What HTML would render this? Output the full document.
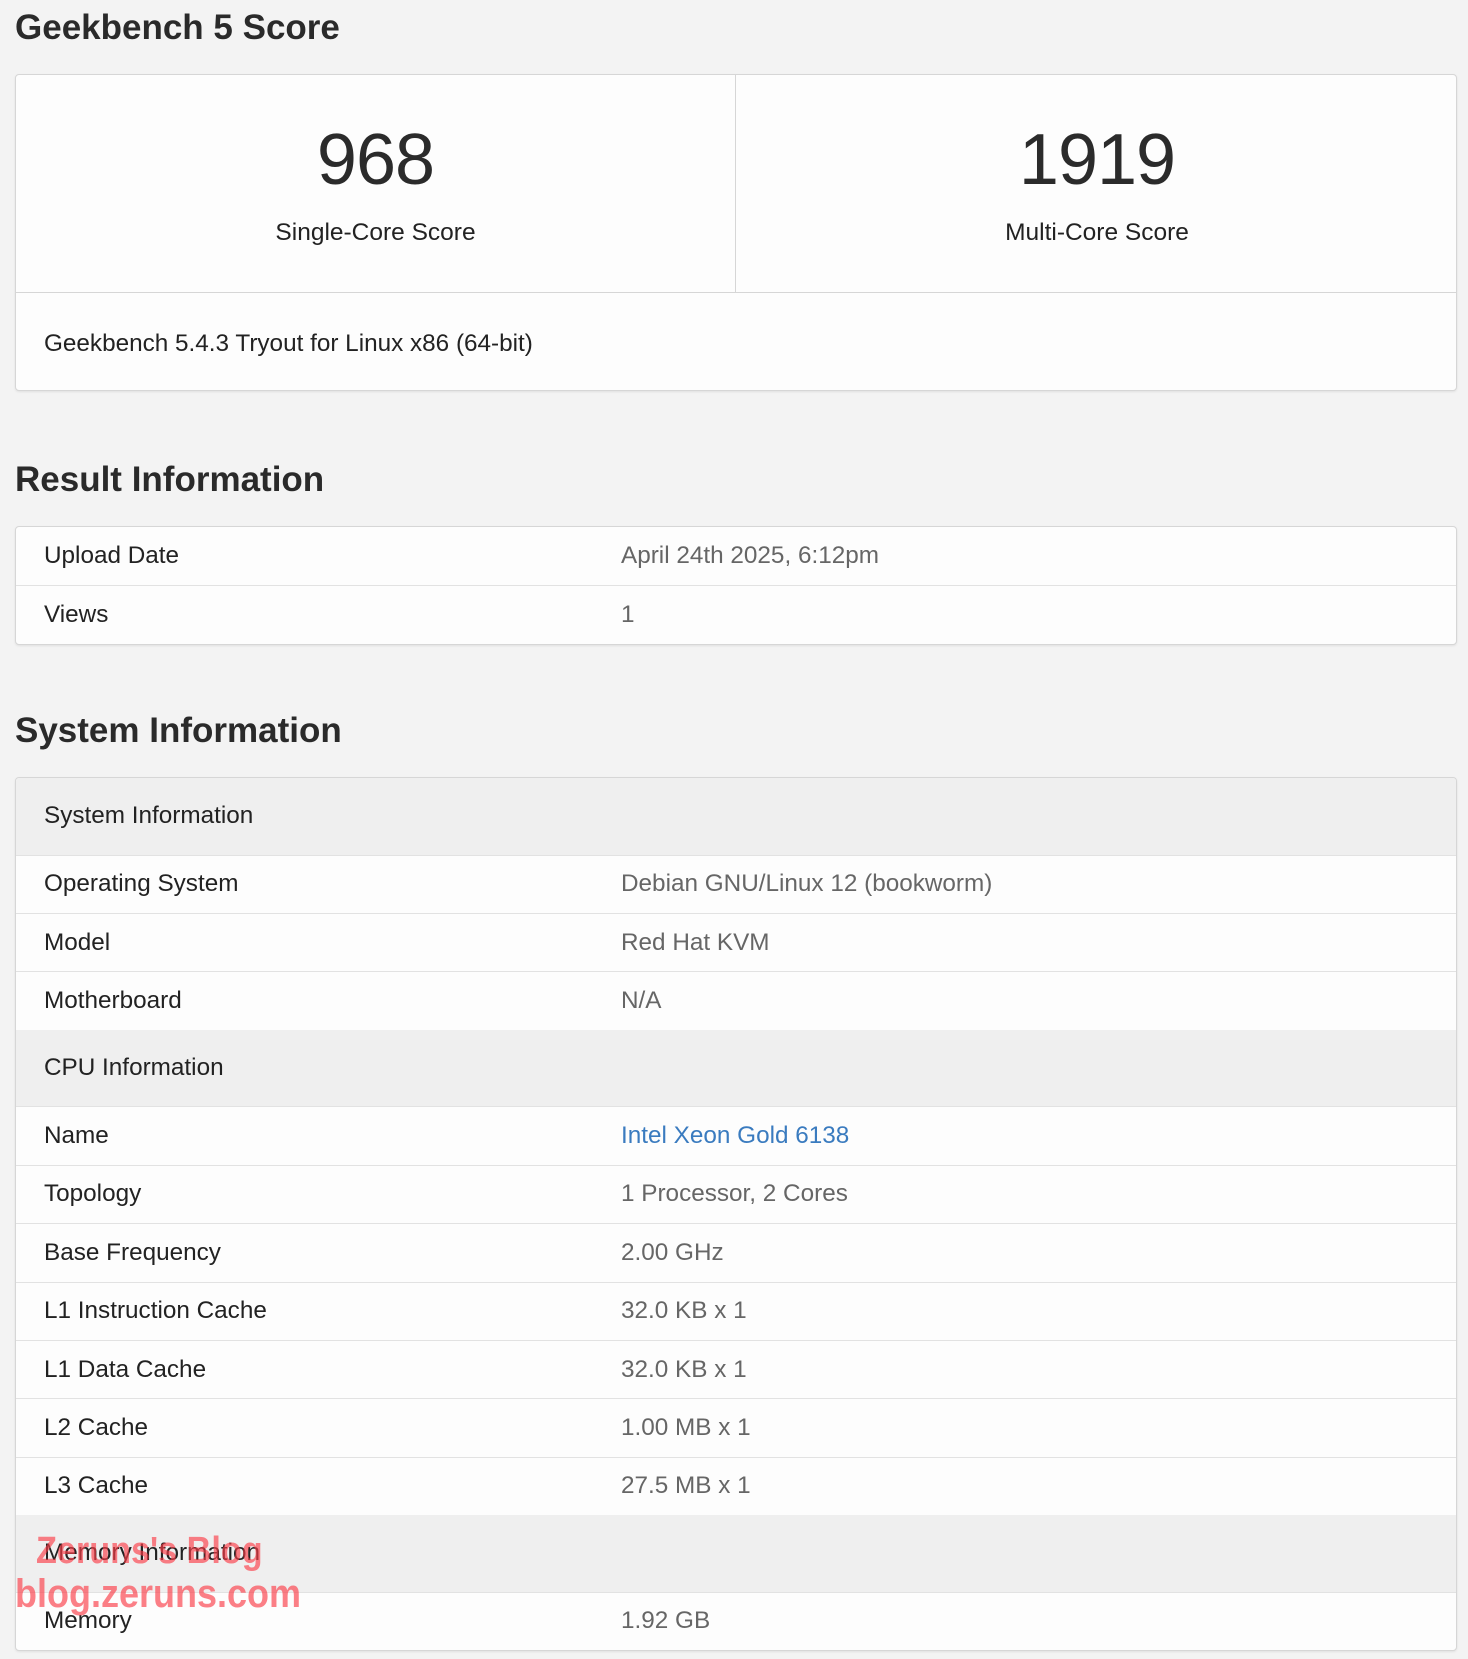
<!DOCTYPE html>
<html><head><meta charset="utf-8"><style>
*{box-sizing:border-box;margin:0;padding:0}
body{width:1468px;height:1659px;background:#f3f3f3;font-family:"Liberation Sans",Arial,sans-serif;color:#222;position:relative;overflow:hidden}
h2{position:absolute;left:15px;font-size:35px;font-weight:bold;color:#2a2a2a}
.card{position:absolute;left:15px;width:1442px;background:#fdfdfd;border:1px solid #d6d6d6;border-radius:4px;box-shadow:0 1px 2px rgba(0,0,0,.08);overflow:hidden}
.score{position:absolute;top:0;height:217px;width:720px;text-align:center}
.score .n{position:absolute;top:44px;width:100%;font-size:72px;color:#2b2b2b;letter-spacing:-1px}
.score .l{position:absolute;top:144px;width:100%;font-size:24.5px;color:#222}
.row{position:relative;height:58.4px;border-top:1px solid #e2e2e2;font-size:24.3px}
.row:first-child{border-top:none}
.row .k{position:absolute;left:28px;top:50%;transform:translateY(-50%)}
.row .v{position:absolute;left:605px;top:50%;transform:translateY(-50%);color:#666}
.hd{height:76.6px;background:#efefef;border-top:none}
.hd+.row{border-top:1px solid #e2e2e2}
a{color:#3a7bbf;text-decoration:none}
.wm{position:absolute;color:rgba(250,60,70,.65);font-family:"Liberation Sans",sans-serif;font-weight:bold;transform:scaleX(0.9);transform-origin:left top;white-space:nowrap}
</style></head><body>
<h2 style="top:8px">Geekbench 5 Score</h2>
<div class="card" style="top:74px;height:317px">
 <div class="score" style="left:0;border-right:1px solid #d6d6d6">
  <div class="n">968</div><div class="l">Single-Core Score</div></div>
 <div class="score" style="left:720px;width:722px">
  <div class="n">1919</div><div class="l">Multi-Core Score</div></div>
 <div style="position:absolute;top:217px;left:0;right:0;border-top:1px solid #d6d6d6"></div>
 <div style="position:absolute;top:255px;left:28px;font-size:24.3px">Geekbench 5.4.3 Tryout for Linux x86 (64-bit)</div>
</div>
<h2 style="top:460px">Result Information</h2>
<div class="card" style="top:526px">
 <div class="row"><span class="k">Upload Date</span><span class="v">April 24th 2025, 6:12pm</span></div>
 <div class="row"><span class="k">Views</span><span class="v">1</span></div>
</div>
<h2 style="top:711px">System Information</h2>
<div class="card" style="top:777px">
 <div class="row hd"><span class="k">System Information</span></div>
 <div class="row"><span class="k">Operating System</span><span class="v">Debian GNU/Linux 12 (bookworm)</span></div>
 <div class="row"><span class="k">Model</span><span class="v">Red Hat KVM</span></div>
 <div class="row"><span class="k">Motherboard</span><span class="v">N/A</span></div>
 <div class="row hd"><span class="k">CPU Information</span></div>
 <div class="row"><span class="k">Name</span><span class="v"><a>Intel Xeon Gold 6138</a></span></div>
 <div class="row"><span class="k">Topology</span><span class="v">1 Processor, 2 Cores</span></div>
 <div class="row"><span class="k">Base Frequency</span><span class="v">2.00 GHz</span></div>
 <div class="row"><span class="k">L1 Instruction Cache</span><span class="v">32.0 KB x 1</span></div>
 <div class="row"><span class="k">L1 Data Cache</span><span class="v">32.0 KB x 1</span></div>
 <div class="row"><span class="k">L2 Cache</span><span class="v">1.00 MB x 1</span></div>
 <div class="row"><span class="k">L3 Cache</span><span class="v">27.5 MB x 1</span></div>
 <div class="row hd"><span class="k">Memory Information</span></div>
 <div class="row"><span class="k">Memory</span><span class="v">1.92 GB</span></div>
</div>
<div class="wm" style="left:36px;top:1530px;font-size:38px">Zeruns's Blog</div>
<div class="wm" style="left:15px;top:1572px;font-size:40px">blog.zeruns.com</div>
</body></html>
